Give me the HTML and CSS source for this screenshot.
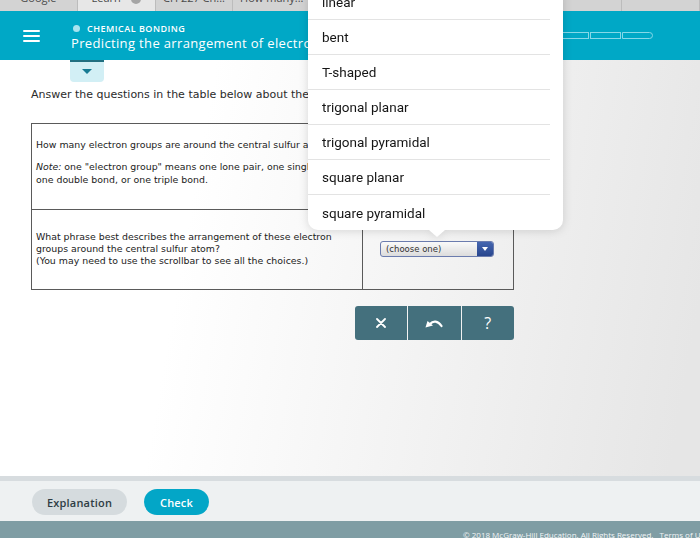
FILE: index.html
```html
<!DOCTYPE html>
<html lang="en">
<head>
    <meta charset="UTF-8">
    <meta name="viewport" content="width=device-width, initial-scale=1.0">
    <title>Predicting the arrangement of electron groups</title>
    <link rel="stylesheet" href="styles.css">
</head>
<body>
    <div class="screen">
        <!-- Browser tabs -->
        <div class="tab-strip">
            <div class="tab"><span>Google</span></div>
            <div class="tab tab-active"><span>Learn</span><i class="tab-badge"></i></div>
            <div class="tab"><span>CH 227 Ch...</span></div>
            <div class="tab"><span>How many...</span></div>
            <div class="tab"></div>
            <div class="tab"></div>
            <div class="tab"></div>
            <div class="tab"></div>
            <div class="tab"></div>
        </div>

        <header class="topic-bar">
            <div class="menu-icon"><span></span><span></span><span></span></div>
            <div class="topic-titles">
                <div class="topic-label"><i class="topic-dot"></i>CHEMICAL BONDING</div>
                <div class="topic-name">Predicting the arrangement of electron groups around the central atom</div>
            </div>
            <div class="progress">
                <span class="progress-seg"></span>
                <span class="progress-seg"></span>
                <span class="progress-seg"></span>
                <span class="progress-seg progress-last"></span>
            </div>
        </header>

        <main class="work-area">
            <div class="pull-tab"><i class="pull-arrow"></i></div>
            <p class="prompt">Answer the questions in the table below about the SF<sub>4</sub> molecule.</p>

            <table class="question-table">
                <colgroup>
                    <col class="col-question">
                    <col class="col-answer">
                </colgroup>
                <tr class="row-groups">
                    <td>
                        <p>How many electron groups are around the central sulfur atom?</p>
                        <p><em>Note:</em> one "electron group" means one lone pair, one single bond,<br>one double bond, or one triple bond.</p>
                    </td>
                    <td><span class="num-input"></span></td>
                </tr>
                <tr class="row-phrase">
                    <td>
                        <p>What phrase best describes the arrangement of these electron<br>groups around the central sulfur atom?<br>(You may need to use the scrollbar to see all the choices.)</p>
                    </td>
                    <td>
                        <div class="choice-select">
                            <span class="choice-text">(choose one)</span>
                            <span class="choice-button"><i></i></span>
                        </div>
                    </td>
                </tr>
            </table>

            <div class="tool-buttons">
                <button class="tool-btn" aria-label="Clear">
                    <svg width="10" height="10" viewBox="0 0 10 10"><path d="M1 1 L9 9 M9 1 L1 9" stroke="#fff" stroke-width="1.8" stroke-linecap="round"/></svg>
                </button>
                <button class="tool-btn" aria-label="Undo">
                    <svg width="18" height="9" viewBox="0 0 18 9"><path d="M5 5 C8 1.5, 13 1.5, 16.5 7" stroke="#fff" stroke-width="2.2" fill="none" stroke-linecap="round"/><path d="M0.5 8.5 L2.5 2 L8 6.5 Z" fill="#fff"/></svg>
                </button>
                <button class="tool-btn tool-help">?</button>
            </div>
        </main>

        <div class="action-bar">
            <button class="pill pill-grey">Explanation</button>
            <button class="pill pill-blue">Check</button>
        </div>

        <footer class="legal">© 2018 McGraw-Hill Education. All Rights Reserved.&nbsp;&nbsp;&nbsp;Terms of Use</footer>

        <!-- Native picker opened from the select -->
        <ul class="picker">
            <li>linear</li>
            <li>bent</li>
            <li>T-shaped</li>
            <li>trigonal planar</li>
            <li>trigonal pyramidal</li>
            <li>square planar</li>
            <li>square pyramidal</li>
        </ul>
    </div>
</body>
</html>
```

FILE: styles.css
```css
* {
    box-sizing: border-box;
}

html, body {
    margin: 0;
    padding: 0;
    height: 100%;
    overflow: hidden;
    background: #fff;
}

.screen {
    position: relative;
    width: 700px;
    height: 538px;
    display: flex;
    flex-direction: column;
    overflow: hidden;
    font-family: "Open Sans", sans-serif;
}

/* Tabs */
.tab-strip {
    height: 11px;
    flex: none;
    display: flex;
    background: #d3d3d3;
    overflow: hidden;
}

.tab {
    flex: 0 0 77.8px;
    display: flex;
    justify-content: center;
    align-items: flex-start;
    gap: 10px;
    border-right: 1px solid #bcbcbc;
    font-size: 11px;
    color: #4a4a4a;
}

.tab span {
    line-height: 12px;
    margin-top: -8px;
}

.tab-active {
    background: #e7e7e7;
}

.tab-badge {
    width: 10px;
    height: 10px;
    margin-top: -6px;
    border-radius: 50%;
    background: #a5a5a5;
}

/* Topic header */
.topic-bar {
    height: 49px;
    flex: none;
    display: flex;
    align-items: center;
    padding-left: 23px;
    background: #00a8c6;
    color: #fff;
}

.menu-icon {
    width: 17px;
    display: flex;
    flex-direction: column;
    gap: 3px;
    margin-right: 30px;
}

.menu-icon span {
    height: 2px;
    background: #fff;
    border-radius: 1px;
}

.topic-titles {
    flex: 1;
    min-width: 0;
    align-self: flex-start;
    padding-top: 11px;
    white-space: nowrap;
    overflow: hidden;
}

.topic-label {
    display: flex;
    align-items: center;
    height: 12px;
    font-size: 9px;
    font-weight: 600;
    letter-spacing: 0.5px;
}

.topic-dot {
    width: 7px;
    height: 7px;
    margin: 0 7px 0 3px;
    border-radius: 50%;
    background: #a8e4f0;
}

.topic-name {
    margin-top: 1px;
    margin-left: 1px;
    font-size: 13px;
    line-height: 17px;
    letter-spacing: 0.35px;
}

.progress {
    display: flex;
    gap: 1px;
    margin: 0 47px 0 12px;
}

.progress-seg {
    width: 31px;
    height: 7px;
    border: 1px solid #86d8e8;
}

.progress-last {
    border-radius: 0 4px 4px 0;
}

/* Question area */
.work-area {
    flex: 1;
    padding-left: 31px;
    background: linear-gradient(100deg, #ffffff 28%, #e6e6e6 96%);
}

.pull-tab {
    width: 34px;
    height: 22px;
    margin-left: 39px;
    padding-top: 7px;
    display: flex;
    justify-content: center;
    background: #d2eff5;
    border-top: 2px solid #216f80;
    border-radius: 0 0 4px 4px;
}

.pull-arrow {
    width: 0;
    height: 0;
    border-left: 5px solid transparent;
    border-right: 5px solid transparent;
    border-top: 5px solid #177b93;
}

.prompt {
    margin: 6px 0 0;
    font-family: "DejaVu Sans", Verdana, sans-serif;
    font-size: 11px;
    line-height: 14px;
    color: #2b2b2b;
    white-space: nowrap;
}

.prompt sub {
    line-height: 0;
}

.question-table {
    margin-top: 21px;
    width: 483px;
    table-layout: fixed;
    border-collapse: collapse;
    font-family: "DejaVu Sans", Verdana, sans-serif;
    font-size: 9.4px;
    color: #222;
}

.col-question {
    width: 331px;
}

.question-table td {
    border: 1px solid #5a5a5a;
    vertical-align: top;
    padding: 0 4px;
}

.question-table p {
    margin: 0;
    white-space: nowrap;
}

.row-groups td {
    height: 86px;
    padding-top: 14px;
    line-height: 13px;
}

.row-groups p + p {
    margin-top: 9px;
}

.row-phrase td {
    height: 80px;
    padding-top: 21px;
    line-height: 12px;
}

.row-phrase td + td {
    padding: 31px 0 0 17px;
}

.num-input {
    display: inline-block;
    margin: 6px 0 0 20px;
    width: 50px;
    height: 18px;
    border: 1px solid #999;
    background: #fff;
}

.choice-select {
    width: 114px;
    height: 16px;
    display: flex;
    border: 1px solid #6b7cae;
    border-radius: 3px;
    overflow: hidden;
    background: linear-gradient(#fafafa, #dcdcdc);
}

.choice-text {
    flex: 1;
    padding-left: 5px;
    font-size: 8.5px;
    line-height: 14px;
    color: #333;
}

.choice-button {
    width: 16px;
    display: flex;
    align-items: center;
    justify-content: center;
    background: linear-gradient(#4566b0, #28468e);
}

.choice-button i {
    width: 0;
    height: 0;
    border-left: 3px solid transparent;
    border-right: 3px solid transparent;
    border-top: 4px solid #fff;
}

.tool-buttons {
    display: flex;
    gap: 1px;
    width: 159px;
    margin: 16px 0 0 324px;
    border-radius: 3px;
    overflow: hidden;
}

.tool-btn {
    flex: 1;
    height: 34px;
    border: none;
    padding: 0;
    display: flex;
    align-items: center;
    justify-content: center;
    background: #44707d;
    color: #fff;
    font-family: "Open Sans", sans-serif;
}

.tool-help {
    font-size: 16px;
}

/* Bottom actions */
.action-bar {
    height: 45px;
    flex: none;
    display: flex;
    align-items: flex-start;
    gap: 17px;
    padding: 8px 0 0 32px;
    background: #eef1f2;
    border-top: 5px solid #d7dcdf;
}

.pill {
    height: 26px;
    border: none;
    border-radius: 13px;
    font-family: "Open Sans", sans-serif;
    font-size: 11px;
    font-weight: 600;
    letter-spacing: 0.2px;
}

.pill-grey {
    width: 95px;
    background: #d5dbde;
    color: #2e3d44;
}

.pill-blue {
    width: 65px;
    background: #03a6c7;
    color: #fff;
}

.legal {
    height: 17px;
    flex: none;
    padding: 9px 0 0 463px;
    background: #7f9da4;
    color: #f2f5f6;
    font-size: 8px;
    line-height: 10px;
    white-space: nowrap;
    overflow: hidden;
}

/* Picker popover */
.picker {
    position: absolute;
    left: 308px;
    top: -15px;
    width: 255px;
    margin: 0;
    padding: 0;
    list-style: none;
    background: #fff;
    border-radius: 10px;
    filter: drop-shadow(0 1px 5px rgba(0, 0, 0, 0.14));
    font-family: Roboto, "Noto Sans", sans-serif;
    font-size: 13.5px;
    color: #151515;
}

.picker::after {
    content: "";
    position: absolute;
    left: 121px;
    bottom: -7px;
    border-left: 8px solid transparent;
    border-right: 8px solid transparent;
    border-top: 7px solid #fff;
}

.picker li {
    height: 35px;
    margin-right: 13px;
    padding-left: 14px;
    display: flex;
    align-items: center;
    border-bottom: 1px solid #e3e3e3;
}

.picker li:last-child {
    border-bottom: none;
}
```
